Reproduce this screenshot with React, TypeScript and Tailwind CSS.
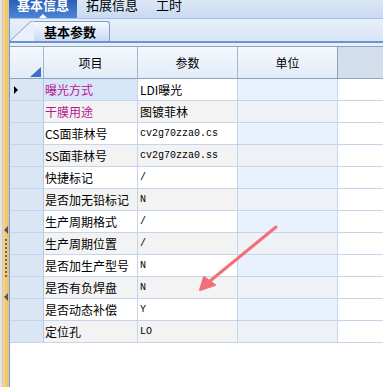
const rows = [
  { name: '曝光方式', value: 'LDI曝光', pink: true, cjk: true },
  { name: '干膜用途', value: '图镀菲林', pink: true, cjk: true },
  { name: 'CS面菲林号', value: 'cv2g70zza0.cs' },
  { name: 'SS面菲林号', value: 'cv2g70zza0.ss' },
  { name: '快捷标记', value: '/' },
  { name: '是否加无铅标记', value: 'N' },
  { name: '生产周期格式', value: '/' },
  { name: '生产周期位置', value: '/' },
  { name: '是否加生产型号', value: 'N' },
  { name: '是否有负焊盘', value: 'N' },
  { name: '是否动态补偿', value: 'Y' },
  { name: '定位孔', value: 'LO' },
];

const cjk = "font-['Noto_Sans_CJK_SC','Noto_Sans',sans-serif]";

function LeftStrip() {
  return (
    <div className="w-[10px] h-full flex shrink-0">
      <div className="w-[3px] bg-[#e4e4e4] border-r border-[#c8c8c8]" />
      <div className="w-[5px] bg-gradient-to-r from-[#f7d88a] to-[#f2c05a] flex flex-col items-center pt-[226px]">
        <div className="w-0 h-0 border-y-[4px] border-y-transparent border-r-[4px] border-r-[#555]" />
        <div className="mt-[5px] w-[2px] h-[40px] bg-[repeating-linear-gradient(to_bottom,#666_0px,#666_2px,transparent_2px,transparent_4px)]" />
        <div className="mt-[14px] w-0 h-0 border-y-[4px] border-y-transparent border-r-[4px] border-r-[#555]" />
      </div>
      <div className="w-[1px] bg-[#c9c9c9]" />
      <div className="w-[1px] bg-[#8a97a8]" />
    </div>
  );
}

function TopTabs() {
  return (
    <div className={`h-[19px] flex items-start bg-gradient-to-b from-[#dce8f7] to-[#c8d9f0] border-b border-[#a9c0e2] text-[13px] leading-[13px] ${cjk}`}>
      <div className="relative w-[68px] h-[18px] -ml-[1px] bg-gradient-to-b from-[#2c5fb6] to-[#4d86d6] text-white font-bold flex justify-center">
        <span className="-mt-[2px]">基本信息</span>
        <div className="absolute left-[30px] bottom-0 w-0 h-0 border-x-[4px] border-x-transparent border-b-[4px] border-b-white" />
      </div>
      <span className="ml-[9px] -mt-[2px] text-black">拓展信息</span>
      <span className="ml-[18px] -mt-[2px] text-black">工时</span>
    </div>
  );
}

function SubTabs() {
  return (
    <div className="h-[24px] flex items-end bg-gradient-to-b from-[#e7effa] to-[#d8e5f6] border-b-2 border-[#6a94d0]">
      <svg width="24" height="20" viewBox="0 0 24 20" className="block shrink-0">
        <path d="M0 20 L20 1 Q21 0 23 0 L24 0 L24 20 Z" fill="#e9f0fa" />
        <path d="M0 20 L20 1 Q21 0 23 0 L24 0" fill="none" stroke="#7d9fd2" strokeWidth="1" />
      </svg>
      <div className={`h-[20px] w-[76px] bg-gradient-to-b from-[#f6f9fe] to-[#c9dbf2] border-t border-r border-[#7d9fd2] rounded-tr-[3px] flex items-center pl-[10px] text-[13px] font-bold text-black ${cjk}`}>
        基本参数
      </div>
    </div>
  );
}

function Header() {
  return (
    <div className="pt-[3px] bg-[#e8eff9]">
      <div className={`h-[33px] flex border-t border-b border-[#8ea2be] text-[12px] text-black ${cjk}`}>
        <div className="w-[34px] relative bg-gradient-to-b from-[#f5f8fd] to-[#e2ebf7] border-r border-[#a7b6cb]">
          <div className="absolute right-[2px] bottom-[1px] w-0 h-0 border-l-[11px] border-l-transparent border-b-[10px] border-b-[#3d6fc4]" />
        </div>
        <div className="w-[94px] flex items-center justify-center bg-gradient-to-b from-[#f5f8fd] to-[#e2ebf7] border-r border-[#a7b6cb]">项目</div>
        <div className="w-[100px] flex items-center justify-center bg-gradient-to-b from-[#f5f8fd] to-[#e2ebf7] border-r border-[#a7b6cb]">参数</div>
        <div className="w-[100px] flex items-center justify-center bg-gradient-to-b from-[#f5f8fd] to-[#e2ebf7] border-r border-[#8ea2be]">单位</div>
        <div className="flex-1 bg-[#d3deec]" />
      </div>
    </div>
  );
}

function Row({ r, i }: { r: (typeof rows)[number]; i: number }) {
  const odd = i % 2 === 1;
  const cell = odd ? 'bg-[#f3f3f3]' : 'bg-white';
  return (
    <div className="h-[22px] flex border-b border-[#c3d4eb] text-[12px] text-black">
      <div className="w-[34px] bg-[#dbe6f4] border-r border-[#b7c9e2] flex items-center pl-[4px]">
        {i === 0 && (
          <div className="w-0 h-0 border-y-[4px] border-y-transparent border-l-[4px] border-l-black" />
        )}
      </div>
      <div
        className={`w-[94px] border-r border-[#c3d4eb] flex items-center pl-[1px] whitespace-nowrap ${cjk} ${
          i === 0 ? 'bg-[#d6e6f8]' : cell
        } ${r.pink ? 'text-[#b8168f]' : 'text-black'}`}
      >
        {r.name}
      </div>
      <div
        className={`w-[100px] border-r border-[#c3d4eb] flex items-center pl-[2px] whitespace-nowrap ${cell} ${
          r.cjk ? `${cjk} text-[12px]` : "font-['Liberation_Mono',monospace] text-[10px]"
        }`}
      >
        {r.value}
      </div>
      <div className={`w-[100px] border-r border-[#c3d4eb] ${odd ? 'bg-[#eef1f5]' : 'bg-[#e8f1fc]'}`} />
      <div className="flex-1 bg-white" />
    </div>
  );
}

export default function App() {
  return (
    <div className="relative w-[383px] h-[387px] flex overflow-hidden bg-white">
      <LeftStrip />
      <div className="flex-1 flex flex-col min-w-0">
        <TopTabs />
        <SubTabs />
        <Header />
        <div className="flex flex-col">
          {rows.map((r, i) => (
            <Row key={r.name} r={r} i={i} />
          ))}
        </div>
      </div>
      <svg className="absolute left-0 top-0 pointer-events-none" width="383" height="387">
        <line x1="276" y1="227" x2="210" y2="281" stroke="#f0707a" strokeWidth="3" strokeLinecap="round" />
        <polygon points="200,290 204,277 215,285" fill="#f0707a" stroke="#f0707a" strokeWidth="2" strokeLinejoin="round" />
      </svg>
    </div>
  );
}
